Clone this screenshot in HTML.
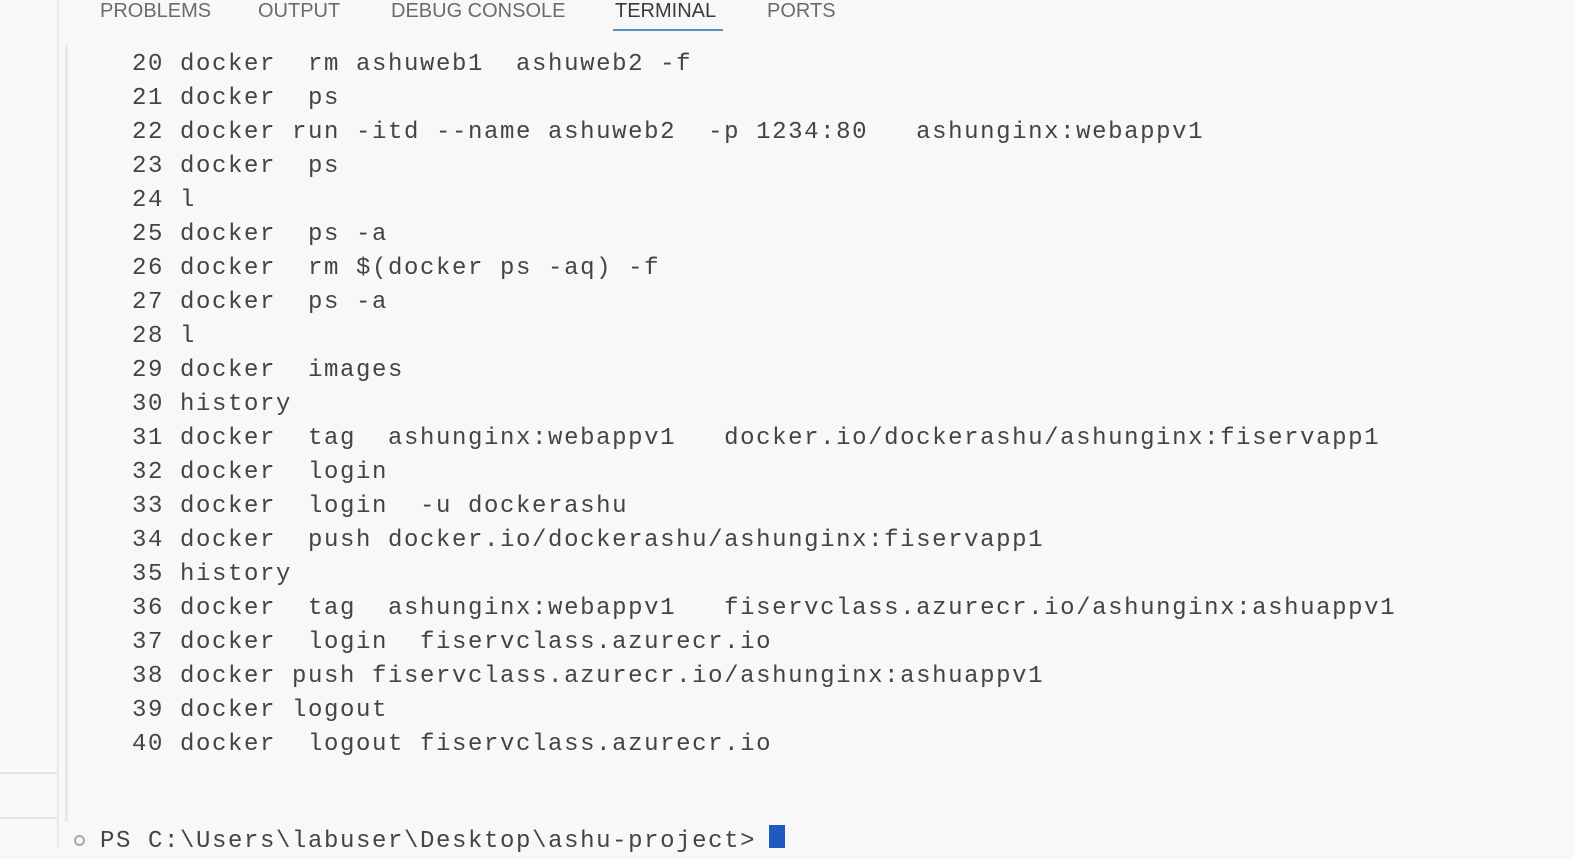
<!DOCTYPE html>
<html><head><meta charset="utf-8">
<style>
html,body{margin:0;padding:0;width:1574px;height:848px;overflow:hidden;background:#f8f8f8;}
.side{position:absolute;left:0;top:0;width:57px;height:848px;background:#f8f8f8;border-right:2px solid #e8e8e8;}
.hl{position:absolute;left:0;width:57px;height:2px;background:#e4e4e4;}
.vl{position:absolute;left:65px;top:45px;width:3px;height:777px;background:#ebe8ec;}
.tab{position:absolute;top:0px;font-family:"Liberation Sans",sans-serif;font-size:20px;color:#6b6b6b;}
.ul{position:absolute;left:613px;top:29px;width:110px;height:2px;background:#5a8fc3;}
pre{position:absolute;left:132px;top:48px;margin:0;font-family:"Liberation Mono",monospace;font-size:24px;letter-spacing:1.6px;line-height:34px;color:#444;}
.prompt{position:absolute;left:100px;top:825px;margin:0;font-family:"Liberation Mono",monospace;font-size:24px;letter-spacing:1.6px;line-height:34px;color:#444;white-space:pre;}
.cur{position:absolute;left:769px;top:825px;width:16px;height:23px;background:#1f5bbf;}
.dot{position:absolute;left:74px;top:835px;width:11px;height:11px;border:2px solid #aaa;border-radius:50%;box-sizing:border-box;}
</style></head><body>
<div class="side"></div>
<div class="hl" style="top:772px"></div>
<div class="hl" style="top:817px"></div>
<div class="vl"></div>
<div class="tab" style="left:100px">PROBLEMS</div>
<div class="tab" style="left:258px">OUTPUT</div>
<div class="tab" style="left:391px">DEBUG CONSOLE</div>
<div class="tab" style="left:615px;color:#3a3a3a">TERMINAL</div>
<div class="tab" style="left:767px">PORTS</div>
<div class="ul"></div>
<pre>20 docker  rm ashuweb1  ashuweb2 -f
21 docker  ps
22 docker run -itd --name ashuweb2  -p 1234:80   ashunginx:webappv1
23 docker  ps
24 l
25 docker  ps -a
26 docker  rm $(docker ps -aq) -f
27 docker  ps -a
28 l
29 docker  images
30 history
31 docker  tag  ashunginx:webappv1   docker.io/dockerashu/ashunginx:fiservapp1
32 docker  login
33 docker  login  -u dockerashu
34 docker  push docker.io/dockerashu/ashunginx:fiservapp1
35 history
36 docker  tag  ashunginx:webappv1   fiservclass.azurecr.io/ashunginx:ashuappv1
37 docker  login  fiservclass.azurecr.io
38 docker push fiservclass.azurecr.io/ashunginx:ashuappv1
39 docker logout
40 docker  logout fiservclass.azurecr.io</pre>
<div class="dot"></div>
<div class="prompt">PS C:\Users\labuser\Desktop\ashu-project&gt;</div>
<div class="cur"></div>
</body></html>
